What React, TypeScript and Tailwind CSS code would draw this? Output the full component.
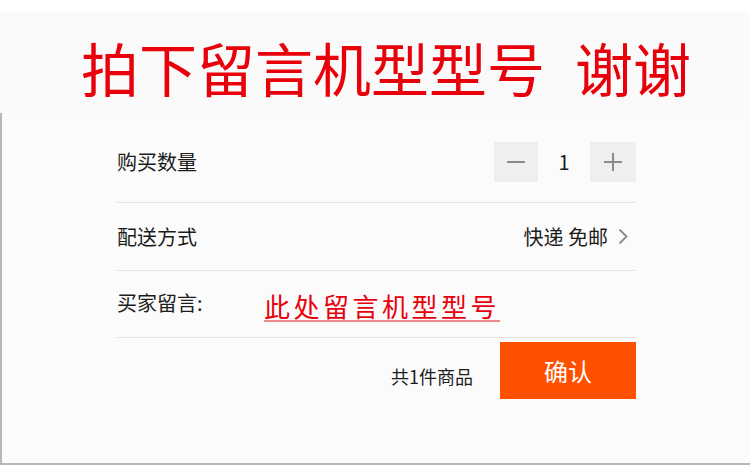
import React from 'react';

const sans = { fontFamily: '"Noto Sans CJK SC", "Noto Sans", sans-serif' };

export default function App() {
  const [qty, setQty] = React.useState(1);

  return (
    <div className="w-[750px] h-[465px] bg-white flex flex-col overflow-hidden" style={sans}>
      {/* banner */}
      <div className="h-[12px] bg-white" />
      <div className="h-[101px] bg-[#fafafa] flex items-center pl-[81px] pt-[9px]">
        <span className="text-[58px] leading-none text-[#e8000b] whitespace-nowrap">拍下留言机型型号</span>
        <span className="text-[58px] leading-none text-[#e8000b] whitespace-nowrap ml-[30px]">谢谢</span>
      </div>

      {/* order panel */}
      <div className="flex-1 bg-[#fbfbfb] border-l-2 border-b-2 border-[#b8b8b8]">
        <div className="ml-[115px] w-[519px] flex flex-col text-[#1c1c1c]">
          {/* quantity */}
          <div className="h-[90px] pt-[8px] flex items-center justify-between border-b border-[#e2e2e2]">
            <span className="text-[20px] leading-none">购买数量</span>
            <div className="flex items-center">
              <button
                className="w-[44px] h-[40px] bg-[#efefef] flex items-center justify-center"
                onClick={() => setQty(Math.max(1, qty - 1))}
              >
                <span className="block w-[18px] h-[2px] bg-[#8a8a8a]" />
              </button>
              <span className="w-[52px] text-center text-[20px] leading-none">{qty}</span>
              <button
                className="w-[46px] h-[40px] bg-[#efefef] flex items-center justify-center relative"
                onClick={() => setQty(qty + 1)}
              >
                <span className="block w-[18px] h-[2px] bg-[#8a8a8a]" />
                <span className="absolute block w-[2px] h-[18px] bg-[#8a8a8a]" />
              </button>
            </div>
          </div>

          {/* delivery */}
          <div className="h-[68px] flex items-center justify-between border-b border-[#e2e2e2]">
            <span className="text-[20px] leading-none">配送方式</span>
            <div className="flex items-center gap-[10px] pr-[8px]">
              <span className="text-[20px] leading-none">快递 免邮</span>
              <svg width="10" height="17" viewBox="0 0 10 17" fill="none">
                <path d="M1.5 1.5 L8.5 8.5 L1.5 15.5" stroke="#8a8a8a" strokeWidth="1.8" />
              </svg>
            </div>
          </div>

          {/* message */}
          <div className="h-[67px] flex items-center border-b border-[#e2e2e2]">
            <span className="text-[20px] leading-none w-[147px] -mt-[2px]">买家留言:</span>
            <span className="text-[26px] leading-none tracking-[3.5px] text-[#e8000b] border-b-2 border-[#ec8a8a] pb-[1px] mt-[6px]">
              此处留言机型型号
            </span>
          </div>

          {/* total + confirm */}
          <div className="flex items-start justify-end pt-[4px]">
            <span className="text-[18px] leading-none mt-[25px] mr-[27px]">共1件商品</span>
            <button className="w-[136px] h-[57px] bg-[#ff5000] text-white text-[24px] leading-none">确认</button>
          </div>
        </div>
      </div>
    </div>
  );
}
